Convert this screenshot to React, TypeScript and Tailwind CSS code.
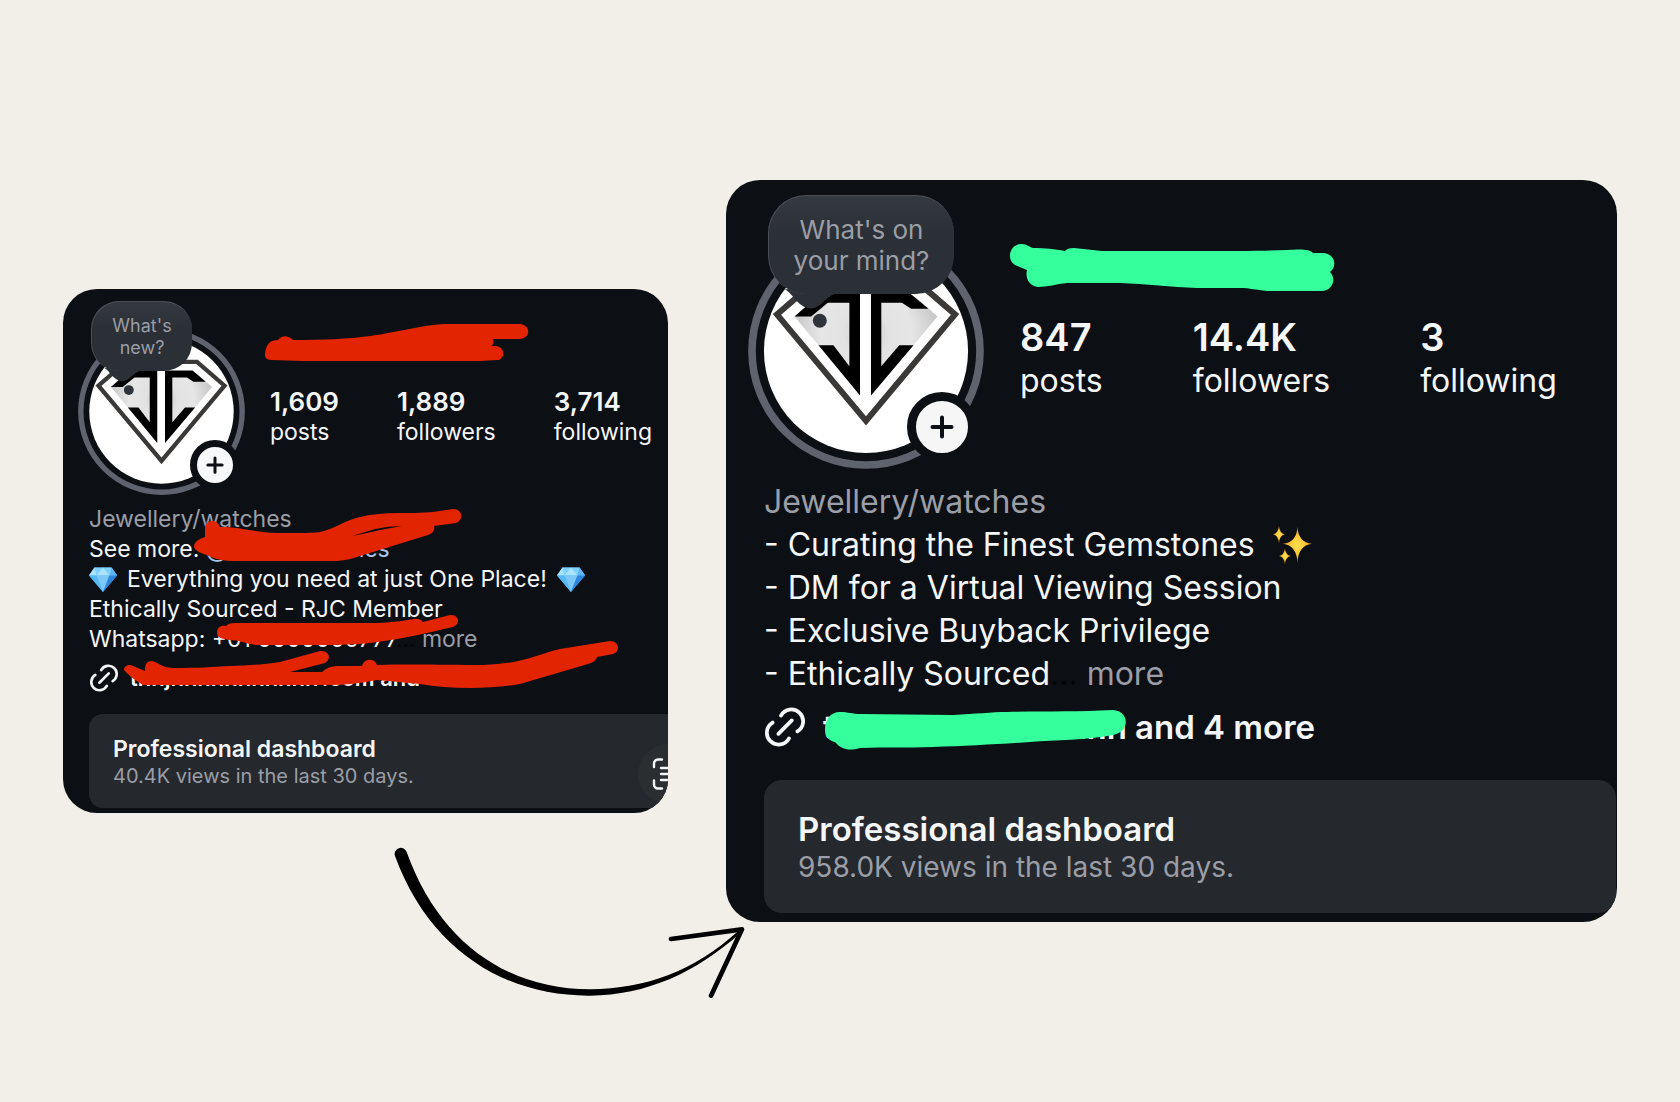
import { ReactNode, useId } from 'react';

interface Stat {
  value: string;
  label: string;
}

const beforeStats: Stat[] = [
  { value: '1,609', label: 'posts' },
  { value: '1,889', label: 'followers' },
  { value: '3,714', label: 'following' },
];

const afterStats: Stat[] = [
  { value: '847', label: 'posts' },
  { value: '14.4K', label: 'followers' },
  { value: '3', label: 'following' },
];

// Jeweller's logo inside the story ring, with the tail of the note bubble over it
function Logo() {
  const facet = useId();
  return (
    <svg viewBox="85 187 710 710" className="block h-full w-full" aria-hidden="true">
      <defs>
        <radialGradient id={facet} gradientUnits="userSpaceOnUse" cx="440" cy="490" r="230">
          <stop offset="0" stopColor="#c4c4c4" />
          <stop offset="0.3" stopColor="#e2e2e2" />
          <stop offset="0.6" stopColor="#e6e6e6" />
          <stop offset="1" stopColor="#c2c2c2" />
        </radialGradient>
      </defs>
      <circle cx="440" cy="542" r="343" fill="none" stroke="#5f636e" strokeWidth="23" />
      <circle cx="440" cy="542" r="307" fill="#fff" />
      <path d="M172 432 289 331H591L708 432 440 752Z" fill="none" stroke="#3a3938" strokeWidth="18" />
      <path d="M225 438 300 380H405V610L297 525Z" fill={`url(#${facet})`} />
      <path d="M655 438 590 380H470V610L583 525Z" fill={`url(#${facet})`} />
      <path d="M422 368V676L297 525H342L390 588V397H325L275 438H225L304 368Z" />
      <path d="M455 368V676L583 525H540L486 588V397H548L576 415H628L572 368Z" />
      <path d="M196 356C222 370 236 413 275 414 302 413 318 380 344 371V350Z" fill="#2b2f36" />
      <circle cx="301" cy="451" r="21" fill="#2f343b" />
    </svg>
  );
}

function PlusIcon() {
  return (
    <svg viewBox="0 0 24 24" className="h-full w-full" fill="none" stroke="#0c0f14" strokeWidth="4" strokeLinecap="round" aria-hidden="true">
      <path d="M12 2.5v19M2.5 12h19" />
    </svg>
  );
}

function LinkIcon({ className }: { className: string }) {
  return (
    <svg viewBox="0 0 40 40" className={className} fill="none" stroke="#f5f6f8" strokeWidth="3.8" strokeLinecap="round" aria-hidden="true">
      <path d="M16 8.6A11.8 11.8 0 1 1 32.4 24.4" />
      <path d="M24 31.4A11.8 11.8 0 1 1 7.6 15.6" />
      <path d="M13.4 26.8 26.8 13.4" />
    </svg>
  );
}

function GemEmoji() {
  return (
    <svg viewBox="0 0 28 25" className="inline-block h-[25px] w-[28px]" role="img" aria-label="gem">
      <path d="M5.5 0.5H22.5L28 8.5 14 25 0 8.5Z" fill="#3da5ee" />
      <path d="M5.5 0.5H22.5L28 8.5H0Z" fill="#7fd0fa" />
      <path d="M5.5 0.5 0 8.5H7.5ZM14 0.5 7.5 8.5H20.5Z" fill="#a9e3fd" />
      <path d="M22.5 0.5 28 8.5H20.5Z" fill="#5bb5f2" />
      <path d="M0 8.5H7.5L14 25Z" fill="#56b9f5" />
      <path d="M7.5 8.5H20.5L14 25Z" fill="#7cc8fa" />
      <path d="M20.5 8.5H28L14 25Z" fill="#2b86dc" />
    </svg>
  );
}

function SparklesEmoji() {
  return (
    <svg viewBox="0 0 118 115" className="inline-block h-[38px] w-[39px]" role="img" aria-label="sparkles">
      <defs>
        <radialGradient id="spark">
          <stop offset="0" stopColor="#ffdf4f" />
          <stop offset="0.5" stopColor="#fbc93a" />
          <stop offset="1" stopColor="#d99028" />
        </radialGradient>
      </defs>
      <g fill="url(#spark)">
        <path d="M74 2Q76 49 118 54 76 59 74 112 72 59 30 54 72 49 74 2Z" />
        <path d="M18 0Q20 23 36 25 20 28 18 52 16 28 0 25 16 23 18 0Z" />
        <path d="M36 68Q38 88 54 91 38 94 36 115 34 94 18 91 34 88 36 68Z" />
      </g>
    </svg>
  );
}

function ScanIcon() {
  return (
    <svg viewBox="0 0 32 32" className="h-8 w-8" fill="none" stroke="#f5f6f8" strokeWidth="2.4" strokeLinecap="round" aria-hidden="true">
      <path d="M10 1.5H6a4 4 0 0 0-4 4V9M2 22.5v4a4 4 0 0 0 4 4h4M22 1.5h4a4 4 0 0 1 4 4V9M30 22.5v4a4 4 0 0 1-4 4h-4" />
      <path d="M9 10h15M9 16h15M9 22h15" />
    </svg>
  );
}

function Arrow() {
  return (
    <svg viewBox="0 0 1140 570" className="absolute top-full left-[317px] z-10 mt-[17px] w-[380px]" aria-hidden="true">
      <path d="M45 78A18 18 0 0 1 80 66C180 345 390 478 630 478 800 475 940 424 1076 302L1082 308C945 430 800 494 630 497 380 499 150 365 45 78Z" />
      <path d="M873 327 1086 298 993 497" fill="none" stroke="#000" strokeWidth="14" strokeLinecap="round" strokeLinejoin="round" />
    </svg>
  );
}

interface StatsProps {
  stats: Stat[];
  className: string;
  valueClass: string;
}

function Stats({ stats, className, valueClass }: StatsProps) {
  return (
    <dl className={className}>
      {stats.map((stat) => (
        <div key={stat.label} className="flex flex-col-reverse self-start">
          <dt>{stat.label}</dt>
          <dd className={valueClass}>{stat.value}</dd>
        </div>
      ))}
    </dl>
  );
}

function Card({ children }: { children: ReactNode }) {
  return (
    <section className="relative overflow-hidden rounded-[34px] bg-[#0c0f14] whitespace-nowrap text-[#f5f6f8]">
      {children}
    </section>
  );
}

function BeforeCard() {
  return (
    <Card>
      <div className="flex pt-[39px] pl-[15px]">
        <div className="relative h-[167px] w-[167px] shrink-0">
          <Logo />
          <div className="absolute -top-[27px] left-[13px] flex h-[70px] w-[101px] items-center justify-center rounded-[28px] border-t border-l border-white/15 bg-linear-to-b from-[#343840] to-[#2b2f36] to-40% text-center text-[18px] leading-[22px] text-[#9b9ea6]">
            What's
            <br />
            new?
          </div>
          <button aria-label="Add story" className="absolute top-[112px] left-[112px] h-[50px] w-[50px] rounded-full border-[7px] border-[#0c0f14] bg-[#f6f8f9] p-[9px]">
            <PlusIcon />
          </button>
        </div>
        <Stats
          stats={beforeStats}
          className="mt-[59px] ml-[25px] flex gap-[58px] text-[23px] leading-[30px]"
          valueClass="text-[26px] font-semibold"
        />
      </div>

      <div className="mt-[9px] pl-[26px] text-[23px] leading-[30px]">
        <p className="text-[#9b9ea6]">Jewellery/watches</p>
        <p className="flex">
          See more:&nbsp;
          <a href="#" className="flex w-[184px] justify-between text-[#a9c7ea]">
            <span>@aaaaaaaa</span>
            <span>ies</span>
          </a>
        </p>
        <p className="flex items-center gap-[10px]">
          <GemEmoji />
          Everything you need at just One Place!
          <GemEmoji />
        </p>
        <p>Ethically Sourced - RJC Member</p>
        <p>
          Whatsapp: +01 0000000777<span className="text-[#050608]">...</span>{' '}
          <button className="text-[#9b9ea6]">more</button>
        </p>
      </div>

      <div className="mt-[10px] flex items-center gap-3 pl-[27px]">
        <LinkIcon className="h-7 w-7" />
        <a href="#" className="flex w-[290px] justify-between text-[22px] leading-7 font-semibold">
          <span>tnnjnnnnnnnnnnn</span>
          <span>.com and</span>
        </a>
      </div>

      <div className="relative mt-[22px] mb-[5px] ml-[26px] rounded-l-[14px] bg-[#25282d] pt-[21px] pb-[19px] pl-6">
        <h2 className="text-[23px] leading-7 font-semibold">Professional dashboard</h2>
        <p className="text-[20px] leading-[26px] text-[#9b9ea6]">40.4K views in the last 30 days.</p>
        <button aria-label="Scan" className="absolute top-[30px] -right-[30px] flex h-[60px] w-[60px] items-center justify-center rounded-full bg-[#2a2e31]">
          <ScanIcon />
        </button>
      </div>

      {/* marker strokes over the private details */}
      <svg viewBox="0 0 605 524" className="pointer-events-none absolute top-0 left-0 w-[605px]" fill="#e32400" aria-hidden="true">
        <path d="M202 65C203 55 207 51 215 51 219 46 225 46 230 51 260 51 285 50 307 47 335 43 360 36 380 35H457C468 36 468 49 457 50H430Q431 56 428 57H433C443 58 442 71 434 71L417 72H240L209 71Q201 71 202 65Z" />
        <path
          fillRule="evenodd"
          d="M142 248 142 239C142 231 154 229 157 238 172 237 190 243 214 244 240 244 252 244 257 243 272 240 282 231 297 228 310 225 322 224 334 224 346 224 358 224 370 223L390 220C400 220 401 231 393 234L371 237Q373 243 365 246L297 267Q287 271 274 272H167Q152 271 144 266C134 263 131 260 131 257 132 252 136 250 142 248ZM289 247Q305 244 317 241L339 237Q325 237 312 240Z"
        />
        <path d="M154 344C154 338 158 336 163 337Q165 334 172 334H307C325 334 340 332 350 330Q357 329 360 333L387 326C396 325 398 335 390 338 360 345 330 352 297 355L270 356H194C182 355 176 351 167 351 158 350 154 348 154 344Z" />
        <path d="M61 381C61 376 67 375 70 377L82 382C81 373 87 370 92 373 98 376 103 379 110 379 135 379 150 378 167 377 185 376 200 376 217 373L257 362C266 361 269 370 262 374L227 383H259Q265 377 274 377H299C301 369 312 369 314 376 345 375 390 376 420 376 460 375 475 365 497 360L547 352C556 352 558 362 550 365L534 368Q533 373 525 375L457 395Q435 399 407 399 380 399 357 395L314 391Q290 396 267 396H80Q68 389 61 381Z" />
      </svg>
    </Card>
  );
}

function AfterCard() {
  return (
    <Card>
      <div className="flex pt-[53px] pl-[22px]">
        <div className="relative h-[236px] w-[236px] shrink-0">
          <Logo />
          <div className="absolute -top-[38px] left-5 flex h-[99px] w-[186px] items-center justify-center rounded-[38px] border-t border-l border-white/15 bg-linear-to-b from-[#343840] to-[#2b2f36] to-40% text-center text-[26px] leading-[31px] text-[#9b9ea6]">
            What's on
            <br />
            your mind?
          </div>
          <button aria-label="Add story" className="absolute top-[159px] left-[159px] h-[70px] w-[70px] rounded-full border-[9px] border-[#0c0f14] bg-[#f6f6f6] p-[14px]">
            <PlusIcon />
          </button>
        </div>
        <Stats
          stats={afterStats}
          className="mt-[83px] ml-9 flex gap-[90px] text-[32px] leading-[43px]"
          valueClass="text-[38px] font-semibold"
        />
      </div>

      <div className="mt-[11px] pl-[38px] text-[32px] leading-[43px]">
        <p className="text-[#9b9ea6]">Jewellery/watches</p>
        <p className="flex items-center gap-[18px]">
          - Curating the Finest Gemstones
          <SparklesEmoji />
        </p>
        <p>- DM for a Virtual Viewing Session</p>
        <p>- Exclusive Buyback Privilege</p>
        <p>
          - Ethically Sourced<span className="text-[#050608]">...</span>{' '}
          <button className="text-[#9b9ea6]">more</button>
        </p>
      </div>

      <div className="mt-3 flex items-center gap-[18px] pl-[39px]">
        <LinkIcon className="h-10 w-10" />
        <a href="#" className="flex gap-2 text-[33px] leading-10 font-semibold">
          <span className="flex w-[304px] justify-between">
            <span>t</span>
            <span>nnn</span>
          </span>
          and 4 more
        </a>
      </div>

      <div className="mt-[33px] mr-px mb-[9px] ml-[38px] rounded-[18px] bg-[#25282d] pt-[30px] pb-[26px] pl-[34px]">
        <h2 className="text-[33px] leading-[38px] font-semibold">Professional dashboard</h2>
        <p className="text-[28px] leading-[39px] text-[#9b9ea6]">958.0K views in the last 30 days.</p>
      </div>

      <svg viewBox="0 0 891 742" className="pointer-events-none absolute top-0 left-0 w-[891px]" fill="#35ff9c" aria-hidden="true">
        <path d="M284 76C284 68 290 64 296 64 301 64 303 67 307 68 320 68 328 69 339 71Q341 68 348 68L376 71H474C510 71 530 71 561 70 575 69 584 69 587 73H597C610 74 611 87 604 92 611 99 606 111 596 111H541C530 110 524 108 514 108H471C445 107 420 104 394 103H341C330 104 322 107 312 107 303 106 299 98 301 90L289 85Q284 82 284 76Z" />
        <path d="M99 550C99 540 104 532 114 532 122 532 127 534 134 534 165 534 195 535 227 535 250 534 265 532 281 532 320 531 350 532 387 530 404 531 404 552 387 555 360 560 330 560 304 562 275 564 240 566 207 567 180 568 160 567 134 568 123 571 116 570 109 562 103 561 99 556 99 550Z" />
      </svg>
    </Card>
  );
}

export default function App() {
  return (
    <main className="grid min-h-screen grid-cols-[605fr_891fr] items-center gap-[58px] overflow-hidden bg-[#f2efe8] px-[63px] font-[Inter,sans-serif]">
      <div className="relative">
        <BeforeCard />
        <Arrow />
      </div>
      <AfterCard />
    </main>
  );
}
